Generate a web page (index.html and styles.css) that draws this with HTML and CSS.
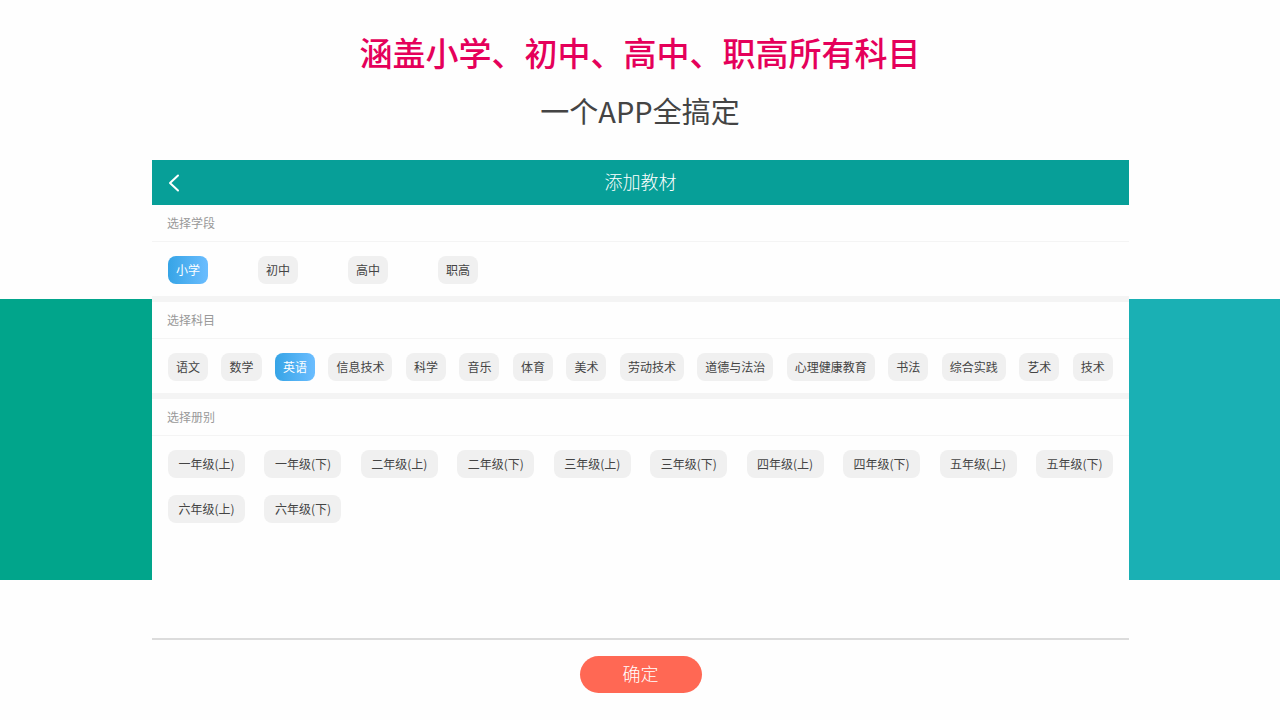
FILE: index.html
```html
<!DOCTYPE html>
<html lang="zh-CN">
<head>
  <meta charset="UTF-8">
  <meta name="viewport" content="width=device-width, initial-scale=1.0">
  <title>添加教材</title>
  <link rel="stylesheet" href="styles.css">
</head>
<body>

<header class="promo">
  <h1>涵盖小学、初中、高中、职高所有科目</h1>
  <p>一个APP全搞定</p>
</header>

<main class="stage">
  <div class="band band-left"></div>

  <div class="panel">
    <div class="topbar">
      <button class="back" aria-label="返回">
        <svg width="12" height="18" viewBox="0 0 12 18" fill="none" stroke="#fff" stroke-width="2" stroke-linecap="round" stroke-linejoin="round">
          <path d="M10 1.5L2 9L10 16.5"/>
        </svg>
      </button>
      <h2>添加教材</h2>
    </div>

    <section>
      <h3>选择学段</h3>
      <div class="chips stages">
        <button class="chip active">小学</button>
        <button class="chip">初中</button>
        <button class="chip">高中</button>
        <button class="chip">职高</button>
      </div>
    </section>

    <section>
      <h3>选择科目</h3>
      <div class="chips subjects">
        <button class="chip">语文</button>
        <button class="chip">数学</button>
        <button class="chip active">英语</button>
        <button class="chip">信息技术</button>
        <button class="chip">科学</button>
        <button class="chip">音乐</button>
        <button class="chip">体育</button>
        <button class="chip">美术</button>
        <button class="chip">劳动技术</button>
        <button class="chip">道德与法治</button>
        <button class="chip">心理健康教育</button>
        <button class="chip">书法</button>
        <button class="chip">综合实践</button>
        <button class="chip">艺术</button>
        <button class="chip">技术</button>
      </div>
    </section>

    <section>
      <h3>选择册别</h3>
      <div class="chips grades">
        <button class="chip">一年级(上)</button>
        <button class="chip">一年级(下)</button>
        <button class="chip">二年级(上)</button>
        <button class="chip">二年级(下)</button>
        <button class="chip">三年级(上)</button>
        <button class="chip">三年级(下)</button>
        <button class="chip">四年级(上)</button>
        <button class="chip">四年级(下)</button>
        <button class="chip">五年级(上)</button>
        <button class="chip">五年级(下)</button>
        <button class="chip">六年级(上)</button>
        <button class="chip">六年级(下)</button>
      </div>
    </section>

    <div class="footer">
      <button class="confirm">确定</button>
    </div>
  </div>

  <div class="band band-right"></div>
</main>

<script>
  // one selected chip per group
  document.querySelectorAll('.chips').forEach(group => {
    group.addEventListener('click', e => {
      if (!e.target.classList.contains('chip')) return;
      group.querySelectorAll('.chip').forEach(chip => chip.classList.remove('active'));
      e.target.classList.add('active');
    });
  });
</script>

</body>
</html>
```
FILE: styles.css
```css
* {
  box-sizing: border-box;
}

body {
  margin: 0;
  min-height: 100vh;
  display: flex;
  flex-direction: column;
  font-family: "Noto Sans CJK SC", sans-serif;
  background-color: #fefefe;
}

h1, h2, h3, p {
  margin: 0;
}

button {
  padding: 0;
  border: none;
  font-family: inherit;
  cursor: pointer;
}

/* Headline */
.promo {
  padding: 28px 0;
  text-align: center;
}

.promo h1 {
  font-size: 33px;
  line-height: 48px;
  font-weight: 500;
  color: #e5005a;
}

.promo p {
  margin-top: 12px;
  font-size: 29px;
  line-height: 44px;
  font-weight: 400;
  color: #444;
}

/* App panel between the two colour bands */
.stage {
  flex: 1;
  display: grid;
  grid-template-columns: 152px 1fr 151px;
}

.band {
  margin: 139px 0 140px;
}

.band-left {
  background-color: #01a58b;
}

.band-right {
  background-color: #1ab0b4;
}

.panel {
  display: flex;
  flex-direction: column;
}

.topbar {
  display: grid;
  grid-template-columns: 44px 1fr 44px;
  height: 45px;
  background-color: #079f98;
}

.back {
  display: flex;
  align-items: center;
  justify-content: center;
  background: none;
}

.topbar h2 {
  font-size: 18px;
  line-height: 42px;
  font-weight: 300;
  text-align: center;
  color: #fff;
}

section + section {
  border-top: 6px solid #f4f4f4;
}

h3 {
  padding: 0 15px;
  font-size: 12px;
  line-height: 36px;
  font-weight: 400;
  color: #999;
  border-bottom: 1px solid #f4f4f4;
}

.chips {
  padding: 14px 16px 12px;
}

.stages {
  display: flex;
  gap: 50px;
}

.subjects {
  display: flex;
  justify-content: space-between;
}

.grades {
  display: grid;
  grid-template-columns: repeat(10, 77px);
  justify-content: space-between;
  row-gap: 17px;
}

.chip {
  height: 28px;
  padding: 0 8px;
  border-radius: 8px;
  font-size: 12px;
  line-height: 28px;
  font-weight: 400;
  white-space: nowrap;
  color: #444;
  background-color: #f0f0f0;
}

.chip.active {
  color: #fff;
  background: linear-gradient(to right, #36a4e6, #6bbdff);
}

.footer {
  margin-top: auto;
  padding: 16px 0 27px;
  text-align: center;
  border-top: 2px solid #dcdcdc;
}

.confirm {
  width: 122px;
  height: 37px;
  padding-bottom: 3px;
  border-radius: 19px;
  font-size: 18px;
  font-weight: 300;
  color: #fff;
  background-color: #ff6854;
}
```
